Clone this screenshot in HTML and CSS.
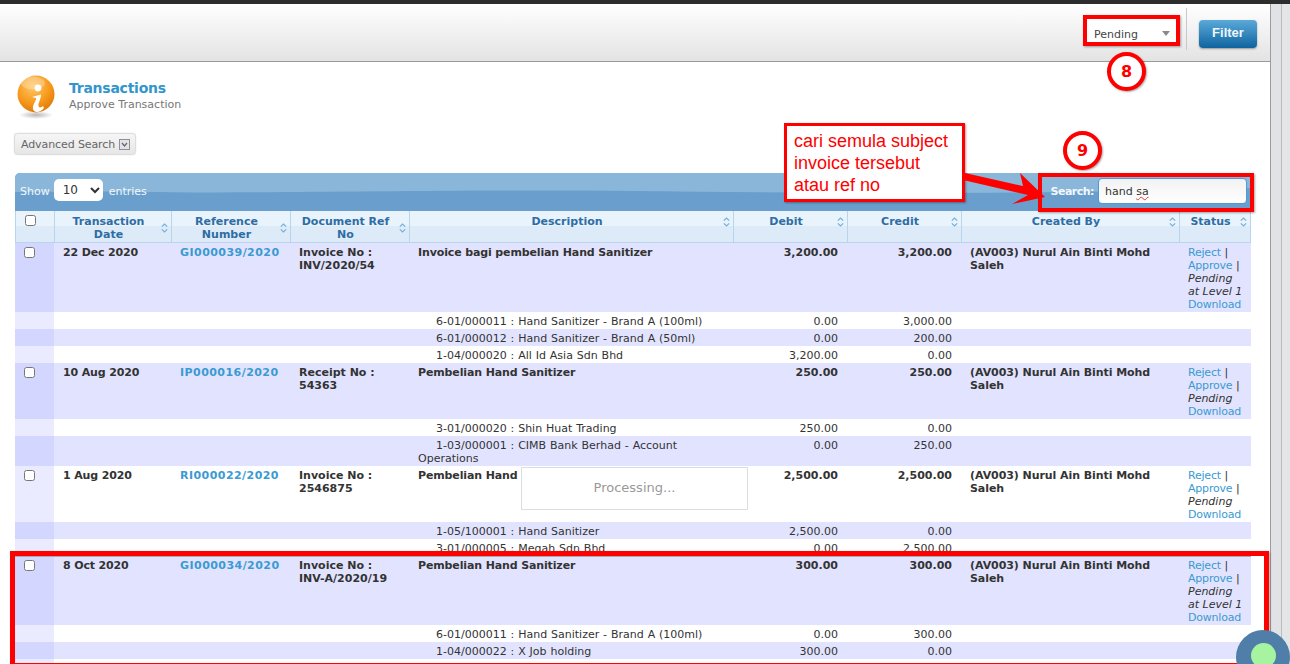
FILE: index.html
```html
<!DOCTYPE html>
<html lang="ms">
<head>
<meta charset="utf-8">
<title>Transactions</title>
<link rel="stylesheet" href="styles.css">
</head>
<body>
<div class="topline"></div>
<div class="shell">
  <main class="main">
    <header class="toolbar">
      <div class="status-select"><span>Pending</span><i class="tri"></i></div>
      <div class="sep"></div>
      <button class="filter" type="button">Filter</button>
    </header>

    <section class="title-row">
      <svg class="info-icon" viewBox="0 0 50 54" width="50" height="54" aria-hidden="true">
        <defs>
          <radialGradient id="orb" cx="0.42" cy="0.3" r="0.8">
            <stop offset="0" stop-color="#ffc767"/>
            <stop offset="0.55" stop-color="#f79a1c"/>
            <stop offset="1" stop-color="#d96f05"/>
          </radialGradient>
          <radialGradient id="shade" cx="0.5" cy="0.5" r="0.5">
            <stop offset="0" stop-color="#000" stop-opacity=".28"/>
            <stop offset="1" stop-color="#000" stop-opacity="0"/>
          </radialGradient>
        </defs>
        <ellipse cx="26" cy="43" rx="17" ry="4" fill="url(#shade)"/>
        <circle cx="26" cy="22" r="18.5" fill="url(#orb)"/>
        <ellipse cx="23" cy="11" rx="12" ry="6.5" fill="#fff" opacity=".28"/>
        <circle cx="28" cy="16" r="3.4" fill="#fff"/>
        <path d="M22 25 L31 22.5 C31 28 27 32 29 35 C30 36 32 35 33 34 L34 36 C30 41 24 41 23 37 C22 33 27 28 26 26 Z" fill="#fff"/>
      </svg>
      <div class="title-text">
        <h1>Transactions</h1>
        <p>Approve Transaction</p>
      </div>
    </section>

    <div class="adv-wrap">
      <button class="adv" type="button">Advanced Search
        <svg class="adv-ico" viewBox="0 0 11 11" width="11" height="11" aria-hidden="true"><rect x=".5" y=".5" width="10" height="10" fill="#e4e4e8" stroke="#8f8f9c"/><path d="M3 4 L5.5 7 L8 4" fill="none" stroke="#666" stroke-width="1.2"/></svg>
      </button>
    </div>

    <div class="grid-wrap">
      <div class="grid-head">
        <svg class="wave" viewBox="0 0 1236 38" preserveAspectRatio="none" aria-hidden="true">
          <path d="M0 0 H1236 V15 C1000 22 800 20 620 18 C430 16 240 21 130 19 C80 18 30 19 0 19 Z" fill="#8ab7d9"/>
        </svg>
        <label class="len">Show
          <select class="len-select"><option>10</option><option>25</option></select>
          entries</label>
        <div class="search">
          <span class="search-label">Search:</span>
          <div class="search-box">hand <span class="typo">sa</span></div>
        </div>
      </div>

      <table class="grid">
        <colgroup>
          <col class="c-chk"><col class="c-date"><col class="c-ref"><col class="c-doc"><col class="c-desc"><col class="c-amt"><col class="c-amt"><col class="c-by"><col class="c-st">
        </colgroup>
        <thead>
          <tr>
            <th class="th-chk"><input type="checkbox"></th>
            <th><div class="th-in"><span>Transaction Date</span><svg class="sort" viewBox="0 0 7 10"><path d="M.8 3.6 L3.5 1 L6.2 3.6 M.8 6.4 L3.5 9 L6.2 6.4"/></svg></div></th>
            <th><div class="th-in"><span>Reference Number</span><svg class="sort" viewBox="0 0 7 10"><path d="M.8 3.6 L3.5 1 L6.2 3.6 M.8 6.4 L3.5 9 L6.2 6.4"/></svg></div></th>
            <th><div class="th-in"><span>Document Ref No</span><svg class="sort" viewBox="0 0 7 10"><path d="M.8 3.6 L3.5 1 L6.2 3.6 M.8 6.4 L3.5 9 L6.2 6.4"/></svg></div></th>
            <th><div class="th-in"><span>Description</span><svg class="sort" viewBox="0 0 7 10"><path d="M.8 3.6 L3.5 1 L6.2 3.6 M.8 6.4 L3.5 9 L6.2 6.4"/></svg></div></th>
            <th><div class="th-in"><span>Debit</span><svg class="sort" viewBox="0 0 7 10"><path d="M.8 3.6 L3.5 1 L6.2 3.6 M.8 6.4 L3.5 9 L6.2 6.4"/></svg></div></th>
            <th><div class="th-in"><span>Credit</span><svg class="sort" viewBox="0 0 7 10"><path d="M.8 3.6 L3.5 1 L6.2 3.6 M.8 6.4 L3.5 9 L6.2 6.4"/></svg></div></th>
            <th><div class="th-in"><span>Created By</span><svg class="sort" viewBox="0 0 7 10"><path d="M.8 3.6 L3.5 1 L6.2 3.6 M.8 6.4 L3.5 9 L6.2 6.4"/></svg></div></th>
            <th class="th-last"><div class="th-in"><span>Status</span><svg class="sort" viewBox="0 0 7 10"><path d="M.8 3.6 L3.5 1 L6.2 3.6 M.8 6.4 L3.5 9 L6.2 6.4"/></svg></div></th>
          </tr>
        </thead>
        <tbody>
          <tr class="odd main-row">
            <td class="first"><input type="checkbox"></td>
            <td class="date">22 Dec 2020</td><td><a href="#">GI000039/2020</a></td><td>Invoice No : INV/2020/54</td><td class="desc">Invoice bagi pembelian Hand Sanitizer</td>
            <td class="num">3,200.00</td><td class="num">3,200.00</td><td class="by">(AV003) Nurul Ain Binti Mohd Saleh</td>
            <td class="status"><a href="#">Reject</a> | <a href="#">Approve</a> | <em>Pending at Level 1</em> <a href="#">Download</a></td>
          </tr>
          <tr class="even"><td class="first"></td><td></td><td></td><td></td><td class="acct">6-01/000011 : Hand Sanitizer - Brand A (100ml)</td><td class="num">0.00</td><td class="num">3,000.00</td><td></td><td></td></tr>
          <tr class="odd"><td class="first"></td><td></td><td></td><td></td><td class="acct">6-01/000012 : Hand Sanitizer - Brand A (50ml)</td><td class="num">0.00</td><td class="num">200.00</td><td></td><td></td></tr>
          <tr class="even"><td class="first"></td><td></td><td></td><td></td><td class="acct">1-04/000020 : All Id Asia Sdn Bhd</td><td class="num">3,200.00</td><td class="num">0.00</td><td></td><td></td></tr>

          <tr class="odd main-row">
            <td class="first"><input type="checkbox"></td>
            <td class="date">10 Aug 2020</td><td><a href="#">IP000016/2020</a></td><td>Receipt No : 54363</td><td class="desc">Pembelian Hand Sanitizer</td>
            <td class="num">250.00</td><td class="num">250.00</td><td class="by">(AV003) Nurul Ain Binti Mohd Saleh</td>
            <td class="status"><a href="#">Reject</a> | <a href="#">Approve</a> | <em>Pending</em> <a href="#">Download</a></td>
          </tr>
          <tr class="even"><td class="first"></td><td></td><td></td><td></td><td class="acct">3-01/000020 : Shin Huat Trading</td><td class="num">250.00</td><td class="num">0.00</td><td></td><td></td></tr>
          <tr class="odd"><td class="first"></td><td></td><td></td><td></td><td class="acct">1-03/000001 : CIMB Bank Berhad - Account Operations</td><td class="num">0.00</td><td class="num">250.00</td><td></td><td></td></tr>

          <tr class="even main-row">
            <td class="first"><input type="checkbox"></td>
            <td class="date">1 Aug 2020</td><td><a href="#">RI000022/2020</a></td><td>Invoice No : 2546875</td><td class="desc">Pembelian Hand Sanitizer</td>
            <td class="num">2,500.00</td><td class="num">2,500.00</td><td class="by">(AV003) Nurul Ain Binti Mohd Saleh</td>
            <td class="status"><a href="#">Reject</a> | <a href="#">Approve</a> | <em>Pending</em> <a href="#">Download</a></td>
          </tr>
          <tr class="odd"><td class="first"></td><td></td><td></td><td></td><td class="acct">1-05/100001 : Hand Sanitizer</td><td class="num">2,500.00</td><td class="num">0.00</td><td></td><td></td></tr>
          <tr class="even"><td class="first"></td><td></td><td></td><td></td><td class="acct">3-01/000005 : Megah Sdn Bhd</td><td class="num">0.00</td><td class="num">2,500.00</td><td></td><td></td></tr>

          <tr class="odd main-row pasted">
            <td class="first"><input type="checkbox"></td>
            <td class="date">8 Oct 2020</td><td><a href="#">GI000034/2020</a></td><td>Invoice No : INV-A/2020/19</td><td class="desc">Pembelian Hand Sanitizer</td>
            <td class="num">300.00</td><td class="num">300.00</td><td class="by">(AV003) Nurul Ain Binti Mohd Saleh</td>
            <td class="status"><a href="#">Reject</a> | <a href="#">Approve</a> | <em>Pending at Level 1</em> <a href="#">Download</a></td>
          </tr>
          <tr class="even"><td class="first"></td><td></td><td></td><td></td><td class="acct">6-01/000011 : Hand Sanitizer - Brand A (100ml)</td><td class="num">0.00</td><td class="num">300.00</td><td></td><td></td></tr>
          <tr class="odd"><td class="first"></td><td></td><td></td><td></td><td class="acct">1-04/000022 : X Job holding</td><td class="num">300.00</td><td class="num">0.00</td><td></td><td></td></tr>
          <tr class="even main-row"><td class="first"><input type="checkbox"></td><td></td><td></td><td></td><td></td><td></td><td></td><td></td><td></td></tr>
        </tbody>
      </table>
    </div>
  </main>
  <div class="scroll-a"></div>
  <div class="scroll-b"></div>
</div>

<div class="processing">Processing...</div>

<div class="mark mark-select"></div>
<div class="mark mark-search"></div>
<div class="mark mark-row"></div>
<div class="badge badge-8">8</div>
<div class="badge badge-9">9</div>
<div class="callout">cari semula subject<br>invoice tersebut<br>atau ref no</div>
<svg class="arrow" viewBox="0 0 90 36" width="90" height="36" aria-hidden="true">
  <path d="M2 1 L60 14 L57 1 L82 25 L49 32 L65 23 L0 8 Z" fill="#f00"/>
</svg>
<div class="bubble"><div class="bubble-dot"></div></div>
</body>
</html>
```
FILE: styles.css
```css
* { box-sizing: border-box; }
html, body { margin: 0; height: 664px; overflow: hidden; }
body {
  font-family: "DejaVu Sans", Verdana, sans-serif;
  font-size: 11px;
  line-height: 13px;
  color: #333;
  background: #fff;
  position: relative;
}
.topline { height: 4px; background: #2d2d2d; }
.shell { display: flex; height: 660px; }
.main { width: 1270px; flex: none; background: #fff; overflow: hidden; }
.scroll-a { width: 11px; background: #e0e2e6; border-left: 1px solid #9c9c9c; }
.scroll-b { flex: 1; background: #e4e5e7; border-left: 1px solid #bcbcbc; }

.toolbar {
  height: 58px;
  display: flex;
  justify-content: flex-end;
  align-items: flex-start;
  padding: 4px 13px 0 0;
  background: linear-gradient(#fff, #e3e3e3);
  border-bottom: 1px solid #999;
}
.status-select {
  width: 89px;
  height: 27px;
  margin-top: 11px;
  padding: 9px 6px 0 7px;
  display: flex;
  justify-content: space-between;
  background: #fff;
  color: #444;
}
.status-select span { line-height: 13px; }
.tri {
  width: 0; height: 0; margin-top: 3px;
  border-left: 4px solid transparent;
  border-right: 4px solid transparent;
  border-top: 5px solid #8a8a8a;
}
.sep { width: 1px; height: 42px; margin: 0 12px 0 10px; background: #c8c8c8; }
.filter {
  width: 58px; height: 28px; margin-top: 12px; padding: 0 0 3px;
  border: 0; border-radius: 4px;
  background: linear-gradient(#5aa9da, #0f649f);
  color: #eef6fb;
  font: bold 13px/14px "Liberation Sans", Arial, sans-serif;
  box-shadow: 0 1px 2px rgba(0,0,0,.35);
}

.title-row { display: flex; gap: 9px; margin-top: 10px; padding-left: 10px; height: 54px; }
.info-icon { flex: none; }
.title-text { padding-top: 8px; }
.title-text h1 {
  margin: 0; color: #3296cc; letter-spacing: -.25px;
  font: bold 14px/16px "DejaVu Sans", Verdana, sans-serif;
}
.title-text p { margin: 2px 0 0; color: #777; line-height: 13px; }

.adv-wrap { margin: 7px 0 18px 14px; }
.adv {
  display: flex; align-items: center; gap: 4px;
  width: 122px; height: 22px; padding: 0 0 0 6px;
  border: 1px solid #ddd; border-radius: 4px;
  background: linear-gradient(#f6f6f6, #e6e6e6);
  color: #666; letter-spacing: -.1px;
  font: 11px/13px "DejaVu Sans", Verdana, sans-serif;
  box-shadow: 0 0 1px rgba(0,0,0,.3);
}

.grid-wrap { margin-left: 15px; width: 1236px; }
.grid-head {
  position: relative;
  height: 38px;
  padding: 0 4px 2px 5px;
  display: flex; align-items: center; justify-content: space-between;
  background: #6a9fcd;
  border-radius: 5px 5px 0 0;
  color: #f2f7fb;
  overflow: hidden;
}
.wave { position: absolute; left: 0; top: 0; width: 100%; height: 100%; }
.len, .search { position: relative; display: flex; align-items: center; }
.len-select {
  width: 49px; height: 22px; margin: 0 6px 2px 4px;
  padding-left: 5px;
  border: 0; border-radius: 5px;
  background: #fff; color: #333;
  font: 12px "DejaVu Sans", Verdana, sans-serif;
}
.search-label { font-weight: bold; margin-right: 4px; letter-spacing: -.5px; }
.search-box {
  width: 149px; height: 26px; padding: 6px 6px 0;
  border: 1px solid #4f9ad6; border-radius: 4px;
  background: linear-gradient(#f2f2f2, #fff);
  color: #333;
}
.typo { text-decoration: underline wavy #e33 1px; }

.grid { width: 1236px; table-layout: fixed; border-collapse: separate; border-spacing: 0; }
.c-chk { width: 39px; } .c-date { width: 117px; } .c-ref { width: 119px; } .c-doc { width: 119px; }
.c-desc { width: 324px; } .c-amt { width: 114px; } .c-by { width: 218px; } .c-st { width: 72px; }

.grid th {
  padding: 4px 3px 0 0;
  vertical-align: top;
  height: 32px;
  border-left: 1px solid #b7d5ec;
  border-bottom: 1px solid #b7d5ec;
  background: linear-gradient(#e8f3fc 0 50%, #dcebf7 50% 100%);
  color: #2e6da4;
  font-weight: bold;
}
.grid th.th-last { border-right: 1px solid #b7d5ec; }
.th-chk { text-align: left; }
.th-in { display: flex; align-items: center; }
.th-in span { flex: 1; text-align: center; padding: 0 3px 0 4px; }
.sort { width: 7px; height: 10px; flex: none; fill: none; stroke: #74b0de; stroke-width: 1.2; }

.grid td {
  padding: 3px 9px 1px;
  vertical-align: top;
  overflow-wrap: break-word;
}
.grid tr.odd td { background: #e2e4ff; }
.grid tr.even td { background: #fff; }
.grid tr.odd td.first { background: #d3d6ff; }
.grid tr.even td.first { background: #eaebff; }
.main-row td { font-weight: bold; }
.grid input { display: block; width: 11px; height: 11px; margin: 1px 0 0; }
.grid .th-chk input { margin: 0 0 0 9px; }
.num { text-align: right; }
.acct { text-indent: 18px; word-spacing: .4px; }
.grid a { color: #3a9ad1; text-decoration: none; }
.main-row td > a { letter-spacing: .45px; }
.date { letter-spacing: -.15px; }
.desc { letter-spacing: -.13px; }
.by { letter-spacing: -.07px; }
.main-row td.status { font-weight: normal; padding-right: 5px; }
.main-row td.status a { letter-spacing: -.2px; }
.status em { display: block; }
.status em + a { display: block; }
.pasted td { box-shadow: inset 0 1px 0 #aaa; }

.processing {
  position: absolute; left: 521px; top: 467px;
  width: 227px; height: 43px;
  line-height: 40px; text-align: center;
  background: #fff; border: 1px solid #ddd;
  color: #999; font-size: 13px;
}
.mark {
  position: absolute; border: 4px solid #f00;
  box-shadow: 1px 1px 2px rgba(0,0,0,.35);
  pointer-events: none;
}
.mark-select { left: 1083px; top: 15px; width: 97px; height: 31px; }
.mark-search { left: 1038px; top: 173px; width: 216px; height: 39px; }
.mark-row { left: 10px; top: 551px; width: 1259px; height: 113px; border-width: 5px 5px 1px 5px; }
.badge {
  position: absolute; width: 39px; height: 39px;
  border: 4px solid #f00; border-radius: 50%;
  background: #fff; color: #f00;
  font: bold 16px/32px "DejaVu Sans", sans-serif;
  text-align: center;
  box-shadow: 1px 1px 2px rgba(0,0,0,.35);
}
.badge-8 { left: 1107px; top: 52px; }
.badge-9 { left: 1063px; top: 131px; }
.callout {
  position: absolute; left: 784px; top: 123px;
  width: 181px; height: 79px;
  padding: 4px 0 0 7px;
  border: 3px solid #f00; background: #fff;
  color: #f00;
  font: 18px/22px "Liberation Sans", Arial, sans-serif;
  box-shadow: 1px 1px 2px rgba(0,0,0,.35);
}
.arrow { position: absolute; left: 963px; top: 172px; }
.bubble {
  position: absolute; left: 1236px; top: 630px;
  width: 54px; height: 54px; padding: 13px 0 0 15px;
  border-radius: 50%; background: #4f7fa8;
}
.bubble-dot { width: 25px; height: 25px; border-radius: 50%; background: #a6f3a0; }
```
